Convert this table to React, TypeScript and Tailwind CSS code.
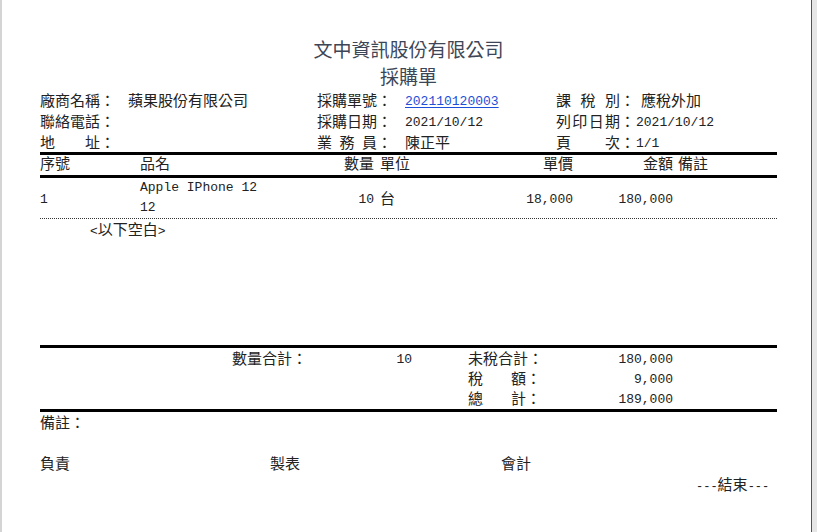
import React from "react";

function A({ children }: { children: React.ReactNode }) {
  return <span className="font-['Liberation_Mono',monospace] text-[13px]">{children}</span>;
}

function L({ text, w }: { text: string; w: string }) {
  return (
    <span className="inline-flex items-center shrink-0">
      <span className={`inline-flex justify-between ${w}`}>
        {text.split("").map((c, i) => (
          <span key={i}>{c}</span>
        ))}
      </span>
      <span>：</span>
    </span>
  );
}

export default function App() {
  return (
    <div className="w-[817px] h-[532px] flex bg-white overflow-hidden font-['Noto_Sans_CJK_TC',sans-serif] text-[15px] text-[#222]">
      <div className="w-[2px] bg-[#d4d4d4] shrink-0" />
      <div className="w-[809px] shrink-0 flex flex-col pl-[38px]">
        <div className="w-[737px] flex flex-col">
          {/* Title */}
          <div className="pt-[35px] text-center text-[19px] leading-[28px] text-[#3c4656]">文中資訊股份有限公司</div>
          <div className="text-center text-[19px] leading-[26px] text-[#3c4656]">採購單</div>

          {/* Header info */}
          <div className="grid grid-cols-[277px_239px_1fr] leading-[21px]">
            <div className="flex h-[21px] items-center">
              <L text="廠商名稱" w="w-[60px]" />
              <span className="ml-[13px]">蘋果股份有限公司</span>
            </div>
            <div className="flex h-[21px] items-center">
              <L text="採購單號" w="w-[60px]" />
              <span className="ml-[13px] text-[#1d4fd8] underline underline-offset-2">
                <A>202110120003</A>
              </span>
            </div>
            <div className="flex h-[21px] items-center">
              <L text="課稅別" w="w-[64px]" />
              <span className="ml-[6px]">應稅外加</span>
            </div>

            <div className="flex h-[21px] items-center">
              <L text="聯絡電話" w="w-[60px]" />
            </div>
            <div className="flex h-[21px] items-center">
              <L text="採購日期" w="w-[60px]" />
              <span className="ml-[13px]">
                <A>2021/10/12</A>
              </span>
            </div>
            <div className="flex h-[21px] items-center">
              <L text="列印日期" w="w-[64px]" />
              <span className="ml-[1px]">
                <A>2021/10/12</A>
              </span>
            </div>

            <div className="flex h-[21px] items-center">
              <L text="地址" w="w-[60px]" />
            </div>
            <div className="flex h-[21px] items-center">
              <L text="業務員" w="w-[60px]" />
              <span className="ml-[13px]">陳正平</span>
            </div>
            <div className="flex h-[21px] items-center">
              <L text="頁次" w="w-[64px]" />
              <span className="ml-[1px]">
                <A>1/1</A>
              </span>
            </div>
          </div>

          {/* Table header */}
          <div className="h-[3px] bg-black" />
          <div className="flex h-[20px] leading-[16px] items-start">
            <div className="w-[100px]">序號</div>
            <div className="w-[200px]">品名</div>
            <div className="w-[34px] text-right">數量</div>
            <div className="w-[106px] pl-[6px]">單位</div>
            <div className="w-[93px] text-right">單價</div>
            <div className="w-[100px] text-right">金額</div>
            <div className="pl-[5px]">備註</div>
          </div>
          <div className="h-[3px] bg-black" />

          {/* Data row */}
          <div className="flex h-[40px] items-center">
            <div className="w-[100px]">
              <A>1</A>
            </div>
            <div className="w-[200px] flex flex-col leading-[20px]">
              <A>Apple IPhone 12</A>
              <A>12</A>
            </div>
            <div className="w-[34px] text-right">
              <A>10</A>
            </div>
            <div className="w-[106px] pl-[6px]">台</div>
            <div className="w-[93px] text-right">
              <A>18,000</A>
            </div>
            <div className="w-[100px] text-right">
              <A>180,000</A>
            </div>
            <div className="pl-[5px]" />
          </div>
          <div className="border-t border-dotted border-[#333]" />
          <div className="h-[20px] leading-[20px] pl-[50px]">
            <A>&lt;</A>以下空白<A>&gt;</A>
          </div>

          <div className="h-[106px]" />

          {/* Totals */}
          <div className="h-[3px] bg-black" />
          <div className="flex flex-col leading-[20px]">
            <div className="flex h-[20px] items-center">
              <div className="w-[192px]" />
              <div className="w-[75px]">
                <L text="數量合計" w="w-[60px]" />
              </div>
              <div className="w-[105px] text-right">
                <A>10</A>
              </div>
              <div className="w-[56px]" />
              <div className="w-[75px]">
                <L text="未稅合計" w="w-[60px]" />
              </div>
              <div className="w-[130px] text-right">
                <A>180,000</A>
              </div>
            </div>
            <div className="flex h-[20px] items-center">
              <div className="w-[428px]" />
              <div className="w-[75px]">
                <L text="稅額" w="w-[58px]" />
              </div>
              <div className="w-[130px] text-right">
                <A>9,000</A>
              </div>
            </div>
            <div className="flex h-[20px] items-center">
              <div className="w-[428px]" />
              <div className="w-[75px]">
                <L text="總計" w="w-[58px]" />
              </div>
              <div className="w-[130px] text-right">
                <A>189,000</A>
              </div>
            </div>
          </div>
          <div className="mt-[1px] h-[3px] bg-black" />

          {/* Footer */}
          <div className="h-[20px] leading-[20px]">備註：</div>
          <div className="h-[21px]" />
          <div className="flex h-[20px] leading-[20px]">
            <div className="w-[230px]">負責</div>
            <div className="w-[231px]">製表</div>
            <div>會計</div>
          </div>
          <div className="h-[21px] leading-[21px] pl-[656px] whitespace-nowrap">
            <span className="font-['Liberation_Mono',monospace] text-[12px]">---</span>
            結束
            <span className="font-['Liberation_Mono',monospace] text-[12px]">---</span>
          </div>
        </div>
      </div>
      <div className="w-[1px] bg-[#555] shrink-0" />
      <div className="flex-1 bg-[#e6e6e6]" />
    </div>
  );
}
